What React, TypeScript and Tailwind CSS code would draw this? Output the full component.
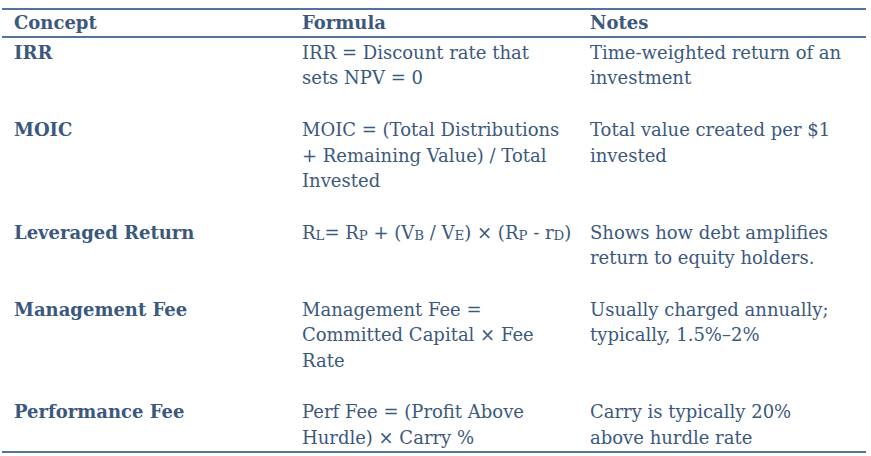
import React from "react";

type Row = { concept: string; formula: React.ReactNode[]; notes: string[] };

const S = ({ children }: { children: React.ReactNode }) => (
  <span className="relative top-[0.12em] text-[0.74em]">{children}</span>
);

const rows: Row[] = [
  {
    concept: "IRR",
    formula: ["IRR = Discount rate that", "sets NPV = 0"],
    notes: ["Time-weighted return of an", "investment"],
  },
  {
    concept: "MOIC",
    formula: ["MOIC = (Total Distributions", "+ Remaining Value) / Total", "Invested"],
    notes: ["Total value created per $1", "invested"],
  },
  {
    concept: "Leveraged Return",
    formula: [
      <>
        R<S>L</S>= R<S>P</S> + (V<S>B</S> / V<S>E</S>) × (R<S>P</S> - r<S>D</S>)
      </>,
    ],
    notes: ["Shows how debt amplifies", "return to equity holders."],
  },
  {
    concept: "Management Fee",
    formula: ["Management Fee =", "Committed Capital × Fee", "Rate"],
    notes: ["Usually charged annually;", "typically, 1.5%–2%"],
  },
  {
    concept: "Performance Fee",
    formula: ["Perf Fee = (Profit Above", "Hurdle) × Carry %"],
    notes: ["Carry is typically 20%", "above hurdle rate"],
  },
];

const Lines = ({ lines }: { lines: React.ReactNode[] }) => (
  <div>
    {lines.map((l, i) => (
      <div key={i} className="whitespace-nowrap">
        {l}
      </div>
    ))}
  </div>
);

export default function App() {
  return (
    <div className="w-[871px] h-[456px] bg-white pt-[8px] pl-[2px] text-[#3b587d] [font-family:'DejaVu_Serif',serif] text-[18px] leading-[25.7px]">
      <div className="w-[864px] border-t-2 border-b-2 border-[#52749c]">
        <div className="grid grid-cols-3 border-b-2 border-[#52749c] font-bold">
          <div className="pl-[12px]">Concept</div>
          <div className="pl-[12px]">Formula</div>
          <div className="pl-[12px]">Notes</div>
        </div>
        {rows.map((r, i) => (
          <div
            key={i}
            className={
              i === rows.length - 1
                ? "grid grid-cols-3 pt-[2px]"
                : "grid grid-cols-3 pt-[2px] pb-[23.7px]"
            }
          >
            <div className="pl-[12px] font-bold">{r.concept}</div>
            <div className="pl-[12px]">
              <Lines lines={r.formula} />
            </div>
            <div className="pl-[12px]">
              <Lines lines={r.notes} />
            </div>
          </div>
        ))}
      </div>
    </div>
  );
}
